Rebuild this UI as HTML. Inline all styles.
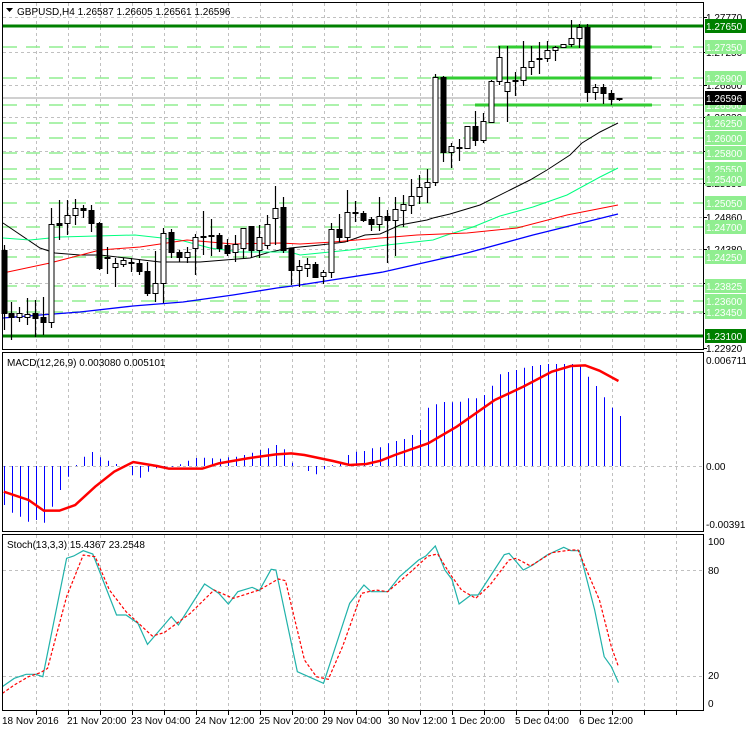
<!DOCTYPE html>
<html><head><meta charset="utf-8"><style>
html,body{margin:0;padding:0;background:#fff;width:746px;height:731px;overflow:hidden}
svg{display:block}
text{font-family:"Liberation Sans",sans-serif;font-size:10px}
</style></head><body>
<svg id="s" width="746" height="731" viewBox="0 0 746 731" xmlns="http://www.w3.org/2000/svg">
<rect width="746" height="731" fill="#fff"/>
<g id="grid" stroke="#c0c0c0" stroke-dasharray="3,3" stroke-width="1"></g>
<g id="lv"></g>
<g id="ma" fill="none"></g>
<g id="cd"></g>
<g id="mc"></g>
<g id="st" fill="none"></g>
<g fill="none" stroke="#000" stroke-width="1">
<rect x="2.5" y="2.5" width="701" height="347"/>
<rect x="2.5" y="352.5" width="701" height="179"/>
<rect x="2.5" y="534.5" width="701" height="176"/>
</g>
<g id="ax"></g>
<text x="17" y="15" font-size="11">GBPUSD,H4  1.26587 1.26605 1.26561 1.26596</text>
<path d="M6 8h7l-3.5 4z" fill="#000"/>
<text x="7" y="366">MACD(12,26,9) 0.003080 0.005101</text>
<text x="7" y="548">Stoch(13,3,3) 15.4367 23.2548</text>
<g fill="#000">
<text x="706" y="364">0.006711</text>
<text x="706" y="470">0.00</text>
<text x="706" y="528">-0.003917</text>
<text x="708" y="545">100</text>
<text x="708" y="574">80</text>
<text x="708" y="679">20</text>
<text x="708" y="707">0</text>
<text x="2" y="724">18 Nov 2016</text>
<text x="67" y="724">21 Nov 20:00</text>
<text x="131" y="724">23 Nov 04:00</text>
<text x="195" y="724">24 Nov 12:00</text>
<text x="259" y="724">25 Nov 20:00</text>
<text x="322" y="724">29 Nov 04:00</text>
<text x="388" y="724">30 Nov 12:00</text>
<text x="451" y="724">1 Dec 20:00</text>
<text x="515" y="724">5 Dec 04:00</text>
<text x="579" y="724">6 Dec 12:00</text>
</g>
<g id="lb"></g>
</svg>
<script>
var NS="http://www.w3.org/2000/svg";
function el(p,t,a,txt){var e=document.createElementNS(NS,t);for(var k in a)e.setAttribute(k,a[k]);if(txt)e.textContent=txt;document.getElementById(p).appendChild(e);return e;}
for(var x=36;x<=680;x+=32){el("grid","line",{x1:x+.5,y1:3,x2:x+.5,y2:349});el("grid","line",{x1:x+.5,y1:353,x2:x+.5,y2:531});el("grid","line",{x1:x+.5,y1:535,x2:x+.5,y2:710});
 el("ax","line",{x1:x+.5,y1:711,x2:x+.5,y2:715,stroke:"#000"});}
var gy=[17,52,85,117,151,183,217,249,283,313];
gy.forEach(function(y){el("grid","line",{x1:3,y1:y+.5,x2:703,y2:y+.5});});
[466,570,676].forEach(function(y){el("grid","line",{x1:3,y1:y+.5,x2:703,y2:y+.5});});
var gl=[[17,"1.27770"],[52,"1.27250"],[85,"1.26800"],[117,"1.26330"],[151,"1.25860"],[183,"1.25390"],[217,"1.24860"],[249,"1.24380"],[283,"1.23900"],[313,"1.23410"],[348,"1.22920"]];
gl.forEach(function(a){el("ax","line",{x1:703,y1:a[0]+.5,x2:707,y2:a[0]+.5,stroke:"#000"});el("ax","text",{x:706,y:a[0]+4},a[1]);});
var lv=[[26,"1.27650",2],[47,"1.27350",1,498],[78,"1.26900",1,433],[105,"1.26500",1,475],[123,"1.26250"],[138,"1.26000"],[153,"1.25800"],[169,"1.25550"],[179,"1.25400"],[203,"1.25050"],[227,"1.24700"],[257,"1.24250"],[286,"1.23825"],[301,"1.23600"],[312,"1.23450"],[336,"1.23100",2]];
lv.forEach(function(a){var y=a[0];
 if(a[2]==2){el("lv","line",{x1:3,y1:y,x2:703,y2:y,stroke:"#008000","stroke-width":3});}
 else{el("lv","line",{x1:3,y1:y,x2:703,y2:y,stroke:"#90ee90","stroke-width":1.5,"stroke-dasharray":"14,9"});
  if(a[2]==1)el("lv","line",{x1:a[3],y1:y,x2:652,y2:y,stroke:"#32cd32","stroke-width":3});}
 var bg=a[2]==2?"#008000":"#90ee90";
 el("lb","rect",{x:705,y:y-7,width:41,height:14,fill:bg});
 el("lb","text",{x:706,y:y+4,fill:"#fff"},a[1]);
});
el("lv","line",{x1:3,y1:98,x2:703,y2:98,stroke:"#c0c0c0","stroke-width":1.5});
el("lb","rect",{x:705,y:91,width:41,height:14,fill:"#000"});
el("lb","text",{x:706,y:102,fill:"#fff"},"1.26596");
function pl(id,pts,c,w,extra){var d=pts.map(function(p){return p[0]+","+p[1];}).join(" ");var a={points:d,stroke:c,"stroke-width":w||1,fill:"none"};for(var k in extra)a[k]=extra[k];el(id,"polyline",a);}
pl("ma",[[3,223],[40,248],[55,253],[80,255],[100,255],[160,262],[200,262],[250,258],[270,252],[290,248],[300,247],[320,245],[345,242],[365,235],[380,234],[400,225],[427,220],[433,218],[450,214],[480,205],[510,190],[530,180],[547,170],[570,155],[582,143],[600,132],[618,123]],"#000",1);
pl("ma",[[3,238],[30,240],[60,237],[135,235],[180,240],[210,248],[240,252],[290,252],[300,255],[350,250],[387,245],[433,240],[447,235],[473,227],[500,216],[533,207],[567,195],[600,177],[618,168]],"#00ff7f",1);
pl("ma",[[3,273],[50,263],[100,250],[140,247],[187,240],[233,244],[280,243],[300,244],[333,242],[417,235],[467,233],[517,228],[567,215],[618,205]],"#ff0000",1);
pl("ma",[[3,318],[40,315],[80,312],[133,306],[183,302],[233,295],[277,288],[300,285],[383,272],[467,253],[533,235],[618,214]],"#0000ff",1.3);
var C=[[4,250,313,245,330,0],[11,313,317,302,340,0],[19,313,317,307,322,1],[27,314,317,298,325,1],[35,313,318,300,337,0],[43,317,322,297,335,0],[51,224,322,208,328,1],[59,223,225,200,240,0],[67,215,223,200,235,1],[75,208,215,199,225,1],[83,208,210,205,218,0],[91,210,223,205,232,0],[99,223,268,222,270,0],[107,257,258,247,274,0],[115,263,267,258,287,1],[123,260,264,258,267,1],[131,262,263,258,272,0],[139,263,271,260,275,0],[147,271,293,262,296,0],[155,283,293,251,302,1],[163,233,283,228,303,1],[171,232,252,229,258,0],[179,252,257,250,262,0],[187,252,257,247,263,1],[195,237,248,234,275,1],[203,236,237,211,255,0],[211,235,236,219,256,0],[219,235,248,233,252,0],[227,245,253,239,256,0],[235,244,252,235,262,1],[243,228,248,228,258,1],[251,226,250,226,258,0],[259,237,250,225,258,1],[267,224,245,215,249,1],[275,208,218,186,245,1],[283,207,250,197,253,0],[291,248,270,248,285,0],[299,266,270,260,287,1],[307,264,268,258,277,1],[315,264,277,262,278,0],[323,272,276,270,284,1],[331,229,272,223,278,1],[339,229,237,214,242,0],[347,212,237,190,242,1],[355,212,213,201,222,0],[363,213,220,211,222,0],[371,219,224,217,231,0],[379,216,224,197,231,1],[387,216,220,210,263,0],[395,209,220,197,256,1],[403,204,210,195,227,1],[411,196,205,179,214,1],[419,187,196,175,204,1],[427,182,187,169,203,1],[435,77,182,74,186,1],[443,77,152,76,162,0],[451,146,152,143,168,1],[459,147,148,139,161,0],[467,126,148,127,148,1],[475,126,140,111,146,0],[483,121,140,113,143,1],[491,81,122,80,123,1],[499,57,81,46,85,1],[507,82,91,46,122,1],[515,80,81,72,96,1],[523,67,80,41,86,1],[531,61,67,46,75,1],[539,58,59,42,74,0],[547,50,58,41,62,1],[555,47,50,46,61,1],[563,44,47,44,47,1],[571,38,44,20,47,1],[579,27,38,24,48,1],[587,27,92,24,102,0],[595,87,92,84,100,1],[603,87,93,84,104,0],[611,93,99,90,105,0],[619,98,99,98,101,0]];
C.forEach(function(c){var x=c[0];
 el("cd","line",{x1:x+.5,y1:c[3],x2:x+.5,y2:c[4],stroke:"#000","stroke-width":1.2});
 var h=Math.max(c[2]-c[1],1);
 el("cd","rect",{x:x-2,y:c[1]+.5,width:5,height:h,fill:c[5]?"#fff":"#000",stroke:"#000","stroke-width":1});
});
var M=[505,512.7,516.7,521.7,520,522.7,506.7,490,476.7,465,456.7,452,457.3,460.7,464,465.3,475,477.7,471.7,468.3,467.3,466.7,464.3,460.7,458,457.7,458.3,458.7,457.3,456.7,455,452.7,450,448.3,445,449.3,462.7,466,471,474.3,469,465.3,463.3,455,451.7,451,448.3,447.3,443.3,441,439,435,430,407.7,404.3,402,402.3,401.7,398.3,398.3,395,385.7,374.3,372,370,367.7,366,365,364,364,364,364,365,376.7,386,397.3,407.7,416];
M.forEach(function(v,i){var x=4+i*8;el("mc","line",{x1:x+.5,y1:466,x2:x+.5,y2:v,stroke:"#0000ff","stroke-width":1});});
var S=[[8,455],[60,480],[92,512],[125,512],[158,495],[200,440],[240,395],[280,366],[330,378],[355,386],[425,386],[460,370],[520,355],[580,343],[612,340],[640,345],[700,363],[735,375],[770,372],[800,362],[830,345],[900,310],[960,260],[1040,180],[1100,140],[1160,95],[1200,78],[1230,76],[1260,92],[1300,123]].map(function(p){return [p[0]/2.102,340+p[1]/3];});
pl("mc",S,"#ff0000",2.5);
var K=[[5,470],[30,445],[55,433],[75,433],[90,440],[140,85],[155,78],[175,62],[195,72],[245,255],[265,255],[290,280],[310,343],[360,260],[375,285],[430,162],[460,190],[480,222],[500,185],[530,172],[545,182],[570,118],[580,120],[625,425],[680,460],[735,220],[765,165],[780,185],[815,185],[840,140],[880,90],[895,78],[915,48],[935,120],[950,148],[965,222],[990,195],[1005,195],[1060,74],[1070,70],[1100,120],[1120,105],[1150,75],[1185,52],[1200,62],[1218,62],[1250,240],[1270,380],[1285,410],[1300,458]].map(function(p){return [p[0]/2.102,530+p[1]/3];});
var D=[[5,490],[30,465],[60,440],[85,428],[100,415],[140,200],[175,75],[200,80],[230,180],[265,245],[320,318],[345,308],[400,250],[450,180],[490,205],[545,180],[585,147],[600,152],[640,390],[665,440],[690,448],[720,350],[760,190],[790,180],[815,185],[860,130],[900,78],[920,72],[945,130],[970,180],[1000,205],[1030,165],[1070,90],[1085,85],[1115,108],[1160,68],[1200,60],[1215,60],[1260,210],[1285,350],[1300,410]].map(function(p){return [p[0]/2.102,530+p[1]/3];});
pl("st",K,"#20b2aa",1.2);
pl("st",D,"#ff0000",1.2,{"stroke-dasharray":"3,2"});
</script>
</body></html>
